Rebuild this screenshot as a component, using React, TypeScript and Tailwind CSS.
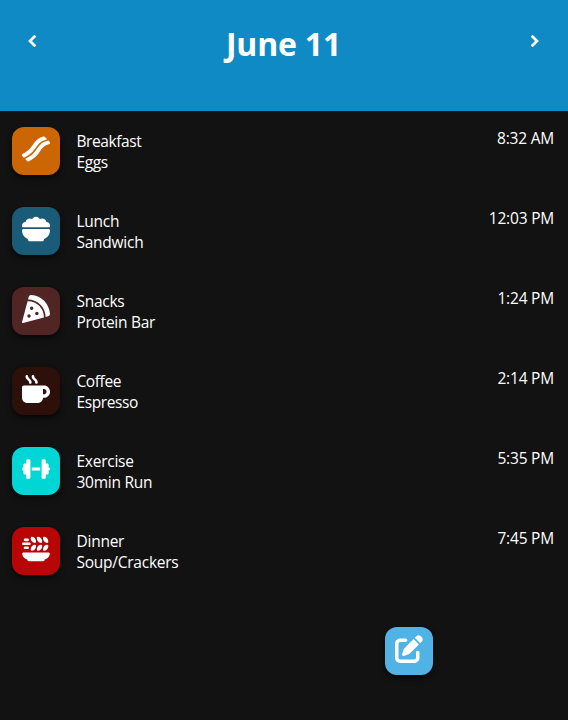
import { FaBacon, FaPlateWheat, FaPizzaSlice, FaMugHot, FaDumbbell, FaBowlFood, FaPenToSquare } from "react-icons/fa6";

const entries = [
  { title: "Breakfast", detail: "Eggs", time: "8:32 AM", color: "bg-[#cc6605]", tracking: "tracking-[-0.4px]", Icon: FaBacon },
  { title: "Lunch", detail: "Sandwich", time: "12:03 PM", color: "bg-[#1a5b78]", tracking: "tracking-[-0.25px]", Icon: FaBowlFood },
  { title: "Snacks", detail: "Protein Bar", time: "1:24 PM", color: "bg-[#522525]", tracking: "tracking-[-0.28px]", Icon: FaPizzaSlice },
  { title: "Coffee", detail: "Espresso", time: "2:14 PM", color: "bg-[#2d100a]", tracking: "tracking-[-0.4px]", Icon: FaMugHot },
  { title: "Exercise", detail: "30min Run", time: "5:35 PM", color: "bg-[#00d6d6]", tracking: "tracking-[-0.25px]", Icon: FaDumbbell },
  { title: "Dinner", detail: "Soup/Crackers", time: "7:45 PM", color: "bg-[#b80505]", tracking: "tracking-[-0.25px]", Icon: FaPlateWheat },
];

function Chevron({ flipped = false }: { flipped?: boolean }) {
  return (
    <svg
      viewBox="0 0 8 12"
      className={`mt-[11px] h-3 w-2 ${flipped ? "rotate-180" : ""}`}
      fill="none"
      stroke="currentColor"
      strokeWidth="2.7"
    >
      <path d="M7.4 .6 2 6l5.4 5.4" />
    </svg>
  );
}

export default function App() {
  return (
    <div className="flex h-[720px] w-full flex-col bg-[#121212] font-['Open_Sans','Noto_Sans',sans-serif] text-white">
      <header className="flex h-[111px] shrink-0 items-start justify-between bg-[#0f8ac4] pt-6 pr-[29px] pl-7">
        <Chevron />
        <h1 className="text-[32px] leading-10 font-bold tracking-[-0.2px]">June 11</h1>
        <Chevron flipped />
      </header>
      <main className="flex flex-col pr-[14px] pl-3">
        {entries.map(({ title, detail, time, color, tracking, Icon }) => (
          <div key={title} className="flex h-20 items-start pt-4">
            <div className={`flex h-12 w-12 items-start justify-center rounded-xl pt-2 shadow-md shadow-black/50 ${color}`}>
              <Icon className="h-7 w-7" />
            </div>
            <div className={`ml-[16.5px] pt-1 text-[15.5px] leading-[21px] ${tracking}`}>
              <p>{title}</p>
              <p>{detail}</p>
            </div>
            <p className="ml-auto text-[15.5px] leading-[22px] tracking-[-0.2px]">{time}</p>
          </div>
        ))}
      </main>
      <button className="mt-9 ml-[385px] flex h-12 w-12 items-start justify-center rounded-xl bg-[#50b2e5] pt-2 shadow-md shadow-black/50">
        <FaPenToSquare className="h-7 w-7" />
      </button>
    </div>
  );
}
